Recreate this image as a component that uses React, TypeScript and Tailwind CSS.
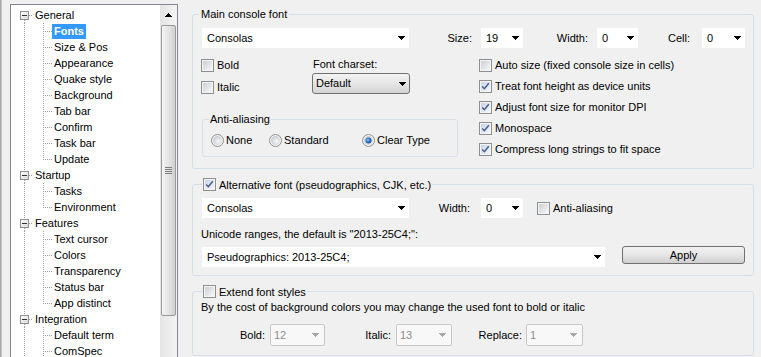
const tree: [string, number, boolean?][] = [
  ["General", 0],
  ["Fonts", 1],
  ["Size & Pos", 1],
  ["Appearance", 1],
  ["Quake style", 1],
  ["Background", 1],
  ["Tab bar", 1],
  ["Confirm", 1],
  ["Task bar", 1],
  ["Update", 1, true],
  ["Startup", 0],
  ["Tasks", 1],
  ["Environment", 1, true],
  ["Features", 0],
  ["Text cursor", 1],
  ["Colors", 1],
  ["Transparency", 1],
  ["Status bar", 1],
  ["App distinct", 1, true],
  ["Integration", 0],
  ["Default term", 1],
  ["ComSpec", 1],
];

function Defs() {
  return (
    <svg className="absolute h-0 w-0" aria-hidden>
      <defs>
        <linearGradient id="cbIn" x1="0" y1="0" x2="1" y2="1">
          <stop offset="0" stopColor="#cbcfd5" />
          <stop offset="1" stopColor="#f7f7f7" />
        </linearGradient>
        <linearGradient id="cbOn" x1="0" y1="0" x2="1" y2="1">
          <stop offset="0" stopColor="#c6d3e6" />
          <stop offset="1" stopColor="#f4f7fb" />
        </linearGradient>
        <radialGradient id="rdIn" cx="0.6" cy="0.6" r="0.6">
          <stop offset="0" stopColor="#f8f8f8" />
          <stop offset="1" stopColor="#c9ccd1" />
        </radialGradient>
        <radialGradient id="rdDot" cx="0.4" cy="0.4" r="0.7">
          <stop offset="0" stopColor="#8cc6f2" />
          <stop offset="0.5" stopColor="#2a73c0" />
          <stop offset="1" stopColor="#0e3f82" />
        </radialGradient>
        <linearGradient id="exp" x1="0" y1="0" x2="1" y2="1">
          <stop offset="0" stopColor="#ffffff" />
          <stop offset="1" stopColor="#d8d8d8" />
        </linearGradient>
      </defs>
    </svg>
  );
}

function Arrow({ color = "#000" }: { color?: string }) {
  return (
    <svg width="7" height="4" viewBox="0 0 7 4" className="shrink-0">
      <path d="M0 0h7v1h-1v1h-1v1h-1v1h-1v-1h-1v-1h-1v-1h-1z" fill={color} />
    </svg>
  );
}

function CheckBox({ on = false }: { on?: boolean }) {
  return (
    <svg width="13" height="13" viewBox="0 0 13 13" className="shrink-0" shapeRendering="crispEdges">
      <rect x="0.5" y="0.5" width="12" height="12" fill="#f4f4f4" stroke="#8e8f8f" />
      <rect x="2" y="2" width="9" height="9" fill={on ? "url(#cbOn)" : "url(#cbIn)"} />
      {on && (
        <path
          d="M3.2 6.4 L5.4 8.7 L9.8 3.2"
          fill="none"
          stroke="#4a5f8c"
          strokeWidth="1.5"
          shapeRendering="geometricPrecision"
        />
      )}
    </svg>
  );
}

function Radio({ on = false }: { on?: boolean }) {
  return (
    <svg width="13" height="13" viewBox="0 0 13 13" className="shrink-0">
      <circle cx="6.5" cy="6.5" r="6" fill="#f4f4f4" stroke="#8e8f8f" />
      <circle cx="6.5" cy="6.5" r="4.5" fill="url(#rdIn)" />
      {on && <circle cx="6.5" cy="6.5" r="3" fill="url(#rdDot)" />}
    </svg>
  );
}

function Combo({ value, w, drop = false, off = false }: { value: string; w: string; drop?: boolean; off?: boolean }) {
  if (drop)
    return (
      <div className={`${w} flex h-[21px] items-center justify-between rounded-[3px] border border-[#707070] bg-gradient-to-b from-[#f3f3f3] via-[#e6e6e6] to-[#d3d3d3] pl-[3px] pr-[3px]`}>
        <span>{value}</span>
        <Arrow />
      </div>
    );
  if (off)
    return (
      <div className={`${w} flex h-[22px] items-center justify-between rounded-[2px] border border-[#c7c7c7] bg-[#f8f8f8] pl-[3px] pr-[5px] text-[#8d8d8d]`}>
        <span>{value}</span>
        <Arrow color="#a8a8a8" />
      </div>
    );
  return (
    <div className={`${w} flex h-[22px] items-center justify-between border border-[#eef0f2] bg-white pl-[5px] pr-[4px]`}>
      <span>{value}</span>
      <Arrow />
    </div>
  );
}

function Row({ on, children }: { on?: boolean; children: React.ReactNode }) {
  return (
    <div className="flex h-[13px] items-center gap-[3px]">
      <CheckBox on={on} />
      <span className="whitespace-nowrap">{children}</span>
    </div>
  );
}

function Gutter({ level, first, last }: { level: number; first: boolean; last?: boolean }) {
  const dot = { stroke: "#a0a0a0", strokeDasharray: "1 1" };
  if (level === 0)
    return (
      <svg width="22" height="16" viewBox="0 0 22 16" className="shrink-0" shapeRendering="crispEdges">
        {!first && <line x1="13.5" y1="0" x2="13.5" y2="4" {...dot} />}
        <line x1="13.5" y1="13" x2="13.5" y2="16" {...dot} />
        <rect x="9.5" y="4.5" width="8" height="8" fill="url(#exp)" stroke="#919191" />
        <line x1="11" y1="8.5" x2="16" y2="8.5" stroke="#333" />
        <line x1="18" y1="8.5" x2="22" y2="8.5" {...dot} />
      </svg>
    );
  return (
    <svg width="41" height="16" viewBox="0 0 41 16" className="shrink-0" shapeRendering="crispEdges">
      <line x1="13.5" y1="0" x2="13.5" y2="16" {...dot} />
      <line x1="32.5" y1="0" x2="32.5" y2={last ? 9 : 16} {...dot} />
      <line x1="34" y1="8.5" x2="41" y2="8.5" {...dot} />
    </svg>
  );
}

function Tree() {
  return (
    <div className="ml-[8px] mt-[4px] flex h-[360px] w-[168px] shrink-0 border border-[#828790] bg-white">
      <div className="flex-1 pt-[2px]">
        {tree.map(([label, level, last], i) => (
          <div key={label} className="flex h-[16px] items-center">
            <Gutter level={level} first={i === 0} last={last} />
            <span
              className={`h-[15px] whitespace-nowrap px-[2px] leading-[15px] ${
                label === "Fonts" ? "bg-[#3399ff] font-bold text-white" : ""
              }`}
            >
              {label}
            </span>
          </div>
        ))}
      </div>
      <div className="flex w-[17px] flex-col items-center bg-gradient-to-r from-[#e4e4e4] to-[#f4f4f4]">
        <div className="flex h-[17px] w-full items-center justify-center pt-[2px]">
          <svg width="7" height="4" viewBox="0 0 7 4">
            <path d="M3 0h1v1h1v1h1v1h1v1h-7v-1h1v-1h1v-1h1z" fill="#000" />
          </svg>
        </div>
        <div className="mt-[3px] flex h-[291px] w-[15px] items-center justify-center rounded-[2px] border border-[#9a9a9a] bg-gradient-to-r from-[#f4f4f4] via-[#e4e4e4] to-[#cfcfcf]">
          <div className="flex flex-col gap-[1px]">
            <div className="h-px w-[7px] bg-[#7d7d7d]" />
            <div className="h-px w-[7px] bg-[#7d7d7d]" />
            <div className="h-px w-[7px] bg-[#7d7d7d]" />
            <div className="h-px w-[7px] bg-[#7d7d7d]" />
          </div>
        </div>
      </div>
    </div>
  );
}

export default function App() {
  return (
    <div className="flex h-[357px] w-[761px] overflow-hidden bg-[#f0f0f0] font-['Liberation_Sans',Arial,sans-serif] text-[11px] leading-[13px] text-black">
      <Defs />
      <div className="h-full w-[2px] shrink-0 bg-gradient-to-r from-[#9c9c9c] to-[#d4d4d4]" />
      <Tree />

      <div className="ml-[14px] flex w-[562px] shrink-0 flex-col pt-[7px]">
        {/* Main console font */}
        <fieldset className="h-[162px] rounded-[3px] border border-[#d5dfe5]">
          <legend className="ml-[6px] px-[2px] leading-[14px]">Main console font</legend>
          <div className="pt-[6px]">
            <div className="flex h-[22px] items-center pl-[8px]">
              <Combo value="Consolas" w="w-[209px]" />
              <span className="w-[70px] pr-[8px] text-right">Size:</span>
              <Combo value="19" w="w-[44px]" />
              <span className="w-[72px] pr-[8px] text-right">Width:</span>
              <Combo value="0" w="w-[43px]" />
              <span className="w-[62px] pr-[11px] text-right">Cell:</span>
              <Combo value="0" w="w-[45px]" />
            </div>
            <div className="flex">
              <div className="w-[265px]">
                <div className="flex pl-[8px]">
                  <div className="w-[111px] pt-[10px]">
                    <Row>Bold</Row>
                    <div className="mt-[9px]">
                      <Row>Italic</Row>
                    </div>
                  </div>
                  <div className="pt-[9px]">
                    <div className="pl-[1px]">Font charset:</div>
                    <div className="mt-[2px]">
                      <Combo value="Default" w="w-[98px]" drop />
                    </div>
                  </div>
                </div>
                <fieldset className="ml-[9px] mt-[18px] h-[45px] w-[256px] rounded-[3px] border border-[#d5dfe5]">
                  <legend className="ml-[6px] px-[1px] leading-[14px]">Anti-aliasing</legend>
                  <div className="flex items-center pl-[8px] pt-[8px]">
                    <div className="flex w-[58px] items-center gap-[2px]">
                      <Radio />
                      <span>None</span>
                    </div>
                    <div className="flex w-[93px] items-center gap-[2px]">
                      <Radio />
                      <span>Standard</span>
                    </div>
                    <div className="flex items-center gap-[2px]">
                      <Radio on />
                      <span>Clear Type</span>
                    </div>
                  </div>
                </fieldset>
              </div>
              <div className="flex flex-col gap-[8px] pl-[21px] pt-[10px]">
                <Row>Auto size (fixed console size in cells)</Row>
                <Row on>Treat font height as device units</Row>
                <Row on>Adjust font size for monitor DPI</Row>
                <Row on>Monospace</Row>
                <Row on>Compress long strings to fit space</Row>
              </div>
            </div>
          </div>
        </fieldset>

        {/* Alternative font */}
        <fieldset className="mt-[9px] h-[98px] rounded-[3px] border border-[#d5dfe5]">
          <legend className="ml-[9px] px-[1px] leading-[14px]">
            <Row on>Alternative font (pseudographics, CJK, etc.)</Row>
          </legend>
          <div className="pt-[6px]">
            <div className="flex h-[22px] items-center pl-[8px]">
              <Combo value="Consolas" w="w-[209px]" />
              <span className="w-[70px] pr-[10px] text-right">Width:</span>
              <Combo value="0" w="w-[44px]" />
              <div className="ml-[13px]">
                <Row>Anti-aliasing</Row>
              </div>
            </div>
            <div className="mt-[9px] pl-[8px]">Unicode ranges, the default is "2013-25C4;":</div>
            <div className="mt-[5px] flex items-start pl-[8px]">
              <Combo value="Pseudographics: 2013-25C4;" w="w-[405px]" />
              <button className="ml-[16px] h-[18px] w-[123px] rounded-[3px] border border-[#707070] bg-gradient-to-b from-[#f2f2f2] via-[#e6e6e6] to-[#cfcfcf] text-[11px] leading-[16px]">
                Apply
              </button>
            </div>
          </div>
        </fieldset>

        {/* Extend font styles */}
        <fieldset className="mt-[9px] h-[71px] rounded-[3px] border border-[#d5dfe5]">
          <legend className="ml-[9px] px-[1px] leading-[14px]">
            <Row>Extend font styles</Row>
          </legend>
          <div className="pl-[8px] pt-[3px]">By the cost of background colors you may change the used font to bold or italic</div>
          <div className="mt-[10px] flex h-[22px] items-center">
            <span className="w-[77px] pr-[5px] text-right">Bold:</span>
            <Combo value="12" w="w-[55px]" off />
            <span className="w-[71px] pr-[5px] text-right">Italic:</span>
            <Combo value="13" w="w-[56px]" off />
            <span className="w-[74px] pr-[4px] text-right">Replace:</span>
            <Combo value="1" w="w-[57px]" off />
          </div>
        </fieldset>
      </div>
    </div>
  );
}
